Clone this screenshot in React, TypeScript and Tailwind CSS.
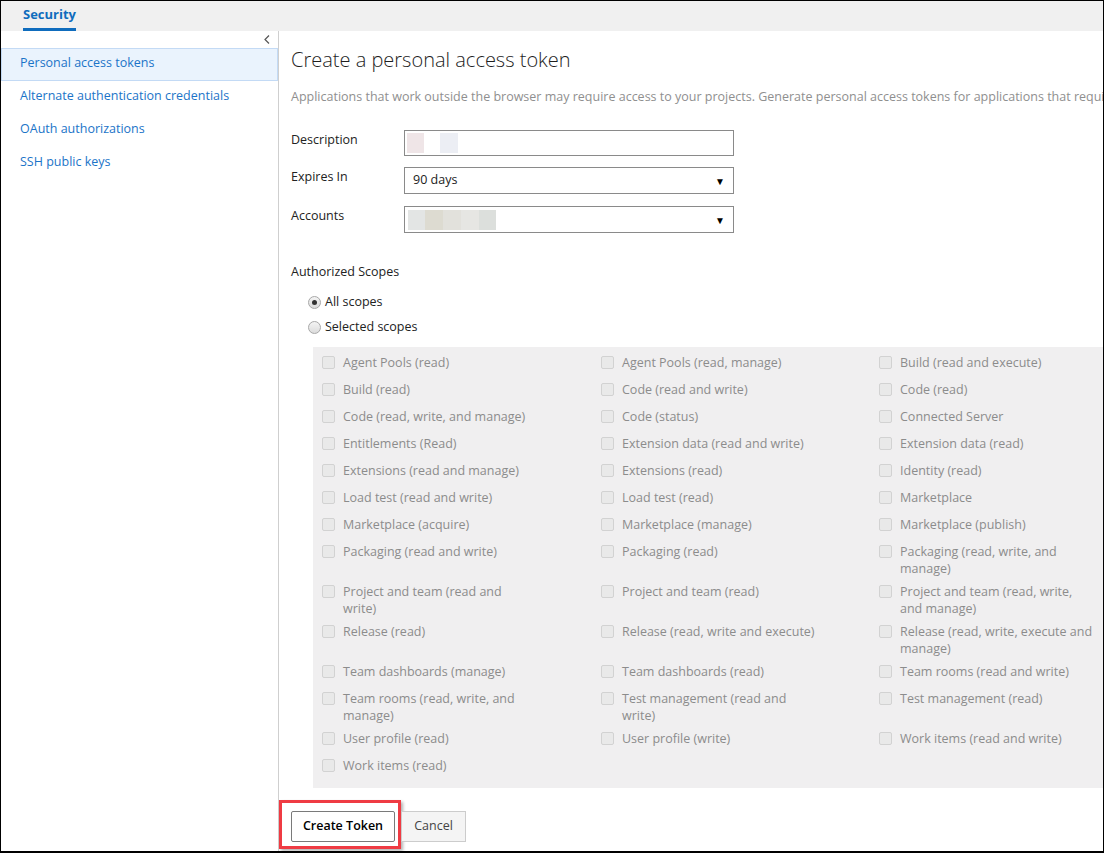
import React from "react";

const font = { fontFamily: '"Open Sans", "Noto Sans", Arial, sans-serif' };

const scopes: string[] = [
  "Agent Pools (read)",
  "Agent Pools (read, manage)",
  "Build (read and execute)",
  "Build (read)",
  "Code (read and write)",
  "Code (read)",
  "Code (read, write, and manage)",
  "Code (status)",
  "Connected Server",
  "Entitlements (Read)",
  "Extension data (read and write)",
  "Extension data (read)",
  "Extensions (read and manage)",
  "Extensions (read)",
  "Identity (read)",
  "Load test (read and write)",
  "Load test (read)",
  "Marketplace",
  "Marketplace (acquire)",
  "Marketplace (manage)",
  "Marketplace (publish)",
  "Packaging (read and write)",
  "Packaging (read)",
  "Packaging (read, write, and\nmanage)",
  "Project and team (read and\nwrite)",
  "Project and team (read)",
  "Project and team (read, write,\nand manage)",
  "Release (read)",
  "Release (read, write and execute)",
  "Release (read, write, execute and\nmanage)",
  "Team dashboards (manage)",
  "Team dashboards (read)",
  "Team rooms (read and write)",
  "Team rooms (read, write, and\nmanage)",
  "Test management (read and\nwrite)",
  "Test management (read)",
  "User profile (read)",
  "User profile (write)",
  "Work items (read and write)",
  "Work items (read)",
];

const navItems = [
  "Personal access tokens",
  "Alternate authentication credentials",
  "OAuth authorizations",
  "SSH public keys",
];

function Caret() {
  return <span className="text-[10px] text-black leading-none">▼</span>;
}

function Radio({ checked, label }: { checked?: boolean; label: string }) {
  return (
    <div className="flex items-center h-[25px]">
      <span className="w-[13px] h-[13px] rounded-full border border-[#a8a8a8] bg-gradient-to-b from-[#f4f4f4] to-[#dcdcdc] flex items-center justify-center">
        {checked && <span className="w-[5px] h-[5px] rounded-full bg-[#333]" />}
      </span>
      <span className="ml-[4px] text-[12.5px] text-[#222]">{label}</span>
    </div>
  );
}

function Scope({ label }: { label: string }) {
  return (
    <div className="flex items-start min-h-[21px]">
      <span className="mt-[2px] w-[13px] h-[13px] shrink-0 border border-[#d2d2d2] bg-[#e9e9e9] rounded-[2px]" />
      <span className="ml-[8px] text-[12.5px] leading-[17px] text-[#8c8c8c] whitespace-pre-line">
        {label}
      </span>
    </div>
  );
}

export default function App() {
  return (
    <div
      style={font}
      className="w-[1104px] h-[853px] overflow-hidden flex flex-col bg-white border-t border-l border-r border-b-2 border-black box-border"
    >
      {/* top bar */}
      <div className="h-[30px] bg-[#f0f0f0] shrink-0 flex pl-[22px]">
        <div className="flex flex-col justify-between">
          <span className="pt-[4px] text-[13px] font-bold text-[#0f6cbd]">Security</span>
          <span className="h-[3px] bg-[#0f6cbd]" />
        </div>
      </div>

      <div className="flex flex-1 min-h-0">
        {/* sidebar */}
        <div className="w-[278px] shrink-0 border-r border-[#cfcfcf] flex flex-col">
          <div className="h-[17px] flex justify-end items-center pr-[8px]">
            <svg width="6" height="9" viewBox="0 0 6 9">
              <path d="M5 0.5 L1 4.5 L5 8.5" fill="none" stroke="#555" strokeWidth="1.2" />
            </svg>
          </div>
          {navItems.map((n, i) => (
            <div
              key={n}
              className={
                i === 0
                  ? "h-[33px] flex items-center pl-[18px] pb-[3px] text-[12.5px] text-[#1b74c8] bg-[#eaf3fd] border border-[#c3daf5]"
                  : "h-[33px] flex items-center pl-[19px] pb-[3px] text-[12.5px] text-[#1b74c8]"
              }
            >
              {n}
            </div>
          ))}
        </div>

        {/* main */}
        <div className="flex-1 min-w-0 pl-[12px] flex flex-col">
          <h1 className="mt-[15px] text-[20px] font-light leading-[28px] text-[#1e1e1e] whitespace-nowrap">
            Create a personal access token
          </h1>
          <p className="mt-[14px] text-[12.5px] leading-[17px] text-[#8f8f8f] whitespace-nowrap">
            Applications that work outside the browser may require access to your projects. Generate personal access tokens for applications that require access.
          </p>

          <div className="mt-[25px] flex flex-col gap-[11px]">
            <div className="flex">
              <span className="w-[113px] pt-[1px] text-[12.5px] text-[#222]">Description</span>
              <div className="w-[330px] h-[26px] border border-[#8a8a8a] flex items-center pl-[2px] gap-[16px]">
                <span className="w-[17px] h-[20px] bg-[#efe5e7]" />
                <span className="w-[18px] h-[20px] bg-[#eceef4]" />
              </div>
            </div>
            <div className="flex">
              <span className="w-[113px] pt-[1px] text-[12.5px] text-[#222]">Expires In</span>
              <div className="w-[330px] h-[27px] border border-[#8a8a8a] flex items-center justify-between pl-[8px] pr-[8px]">
                <span className="text-[12.5px] text-[#222]">90 days</span>
                <Caret />
              </div>
            </div>
            <div className="flex mt-[1px]">
              <span className="w-[113px] pt-[1px] text-[12.5px] text-[#222]">Accounts</span>
              <div className="w-[330px] h-[27px] border border-[#8a8a8a] flex items-center justify-between pl-[3px] pr-[8px]">
                <div className="flex h-[20px]">
                  <span className="w-[17px] bg-[#e3e5e4]" />
                  <span className="w-[18px] bg-[#dddbd1]" />
                  <span className="w-[18px] bg-[#e2e1dc]" />
                  <span className="w-[18px] bg-[#e6e6e3]" />
                  <span className="w-[17px] bg-[#dcdfdc]" />
                </div>
                <Caret />
              </div>
            </div>
          </div>

          <div className="mt-[30px] text-[12.5px] leading-[17px] text-[#222]">Authorized Scopes</div>
          <div className="mt-[10px] ml-[17px]">
            <Radio checked label="All scopes" />
            <Radio label="Selected scopes" />
          </div>

          <div className="mt-[7px] ml-[22px] w-[846px] shrink-0 bg-[#f0eff0] pl-[9px] pt-[7px] pb-[10px] grid grid-cols-[279px_278px_279px] gap-y-[6px]">
            {scopes.map((s) => (
              <Scope key={s} label={s} />
            ))}
          </div>

          <div className="mt-[12px] -ml-[12px] flex items-start">
            <div className="border-[3px] border-[#ef3b43] pl-[9px] pr-[3px] pt-[8px] pb-[4px] shadow-[2px_2px_3px_rgba(0,0,0,0.3)]">
              <button className="w-[104px] h-[31px] border border-[#7a7a7a] rounded-[2px] bg-white text-[12.5px] font-semibold text-black">
                Create Token
              </button>
            </div>
            <button className="mt-[11px] w-[65px] h-[31px] border border-[#cccccc] bg-[#f4f4f4] text-[12.5px] text-[#444]">
              Cancel
            </button>
          </div>
        </div>
      </div>
    </div>
  );
}
